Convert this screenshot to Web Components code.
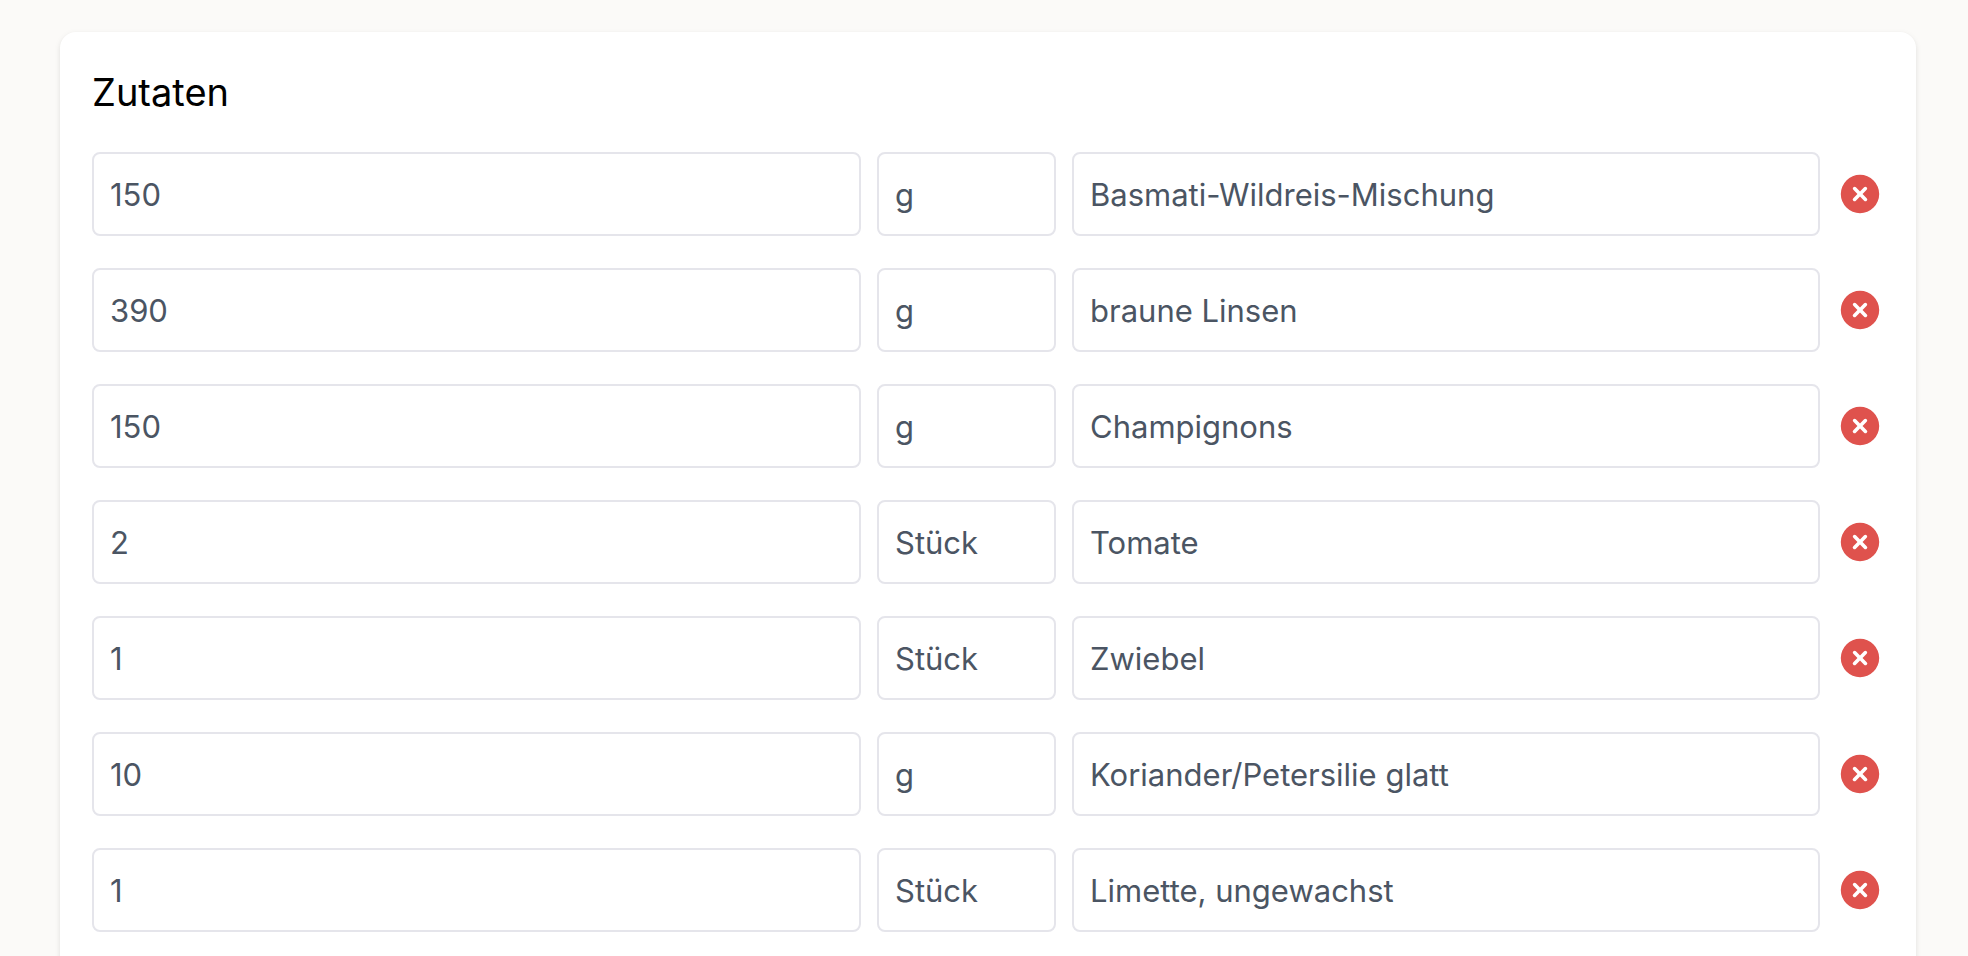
<!DOCTYPE html>
<html lang="de">
<head>
<meta charset="utf-8">
<meta name="viewport" content="width=device-width, initial-scale=1">
<title>Zutaten</title>
<style>
html {
  overflow: hidden auto;
  scrollbar-width: none;
}
body {
  margin: 0;
  padding: 32px 52px 32px 60px;
  background: #fbfaf8;
  color: #000;
  font-family: Inter, "Liberation Sans", sans-serif;
}
</style>
</head>
<body>

<recipe-card>
  <span slot="title">Zutaten</span>
  <ingredient-row amount="150" unit="g" name="Basmati-Wildreis-Mischung"></ingredient-row>
  <ingredient-row amount="390" unit="g" name="braune Linsen"></ingredient-row>
  <ingredient-row amount="150" unit="g" name="Champignons"></ingredient-row>
  <ingredient-row amount="2" unit="Stück" name="Tomate"></ingredient-row>
  <ingredient-row amount="1" unit="Stück" name="Zwiebel"></ingredient-row>
  <ingredient-row amount="10" unit="g" name="Koriander/Petersilie glatt"></ingredient-row>
  <ingredient-row amount="1" unit="Stück" name="Limette, ungewachst"></ingredient-row>
</recipe-card>

<script>
customElements.define('recipe-card', class recipe_card extends HTMLElement {
  constructor() {
    super();
    this.attachShadow({ mode: 'open' });
    const html = `
<style>
:host {
  display: block;
  padding: 32px 32px 64px;
  border-radius: 16px;
  background: #fff;
  box-shadow: 0 2px 6px rgba(0, 0, 0, .08), 0 2px 4px rgba(0, 0, 0, .04);
}
h2 {
  margin: 0 0 32px;
  font-size: 38px;
  font-weight: 400;
  line-height: 56px;
}
.rows {
  display: flex;
  flex-direction: column;
  gap: 32px;
}
</style>

<h2><slot name="title"></slot></h2>
<div class="rows"><slot></slot></div>
  `;
    this.shadowRoot.innerHTML = `${html}`;
  }
});

customElements.define('text-field', class text_field extends HTMLElement {
  constructor() {
    super();
    this.attachShadow({ mode: 'open' });
    const html = `
<style>
:host {
  display: block;
  min-width: 0;
}
input {
  display: block;
  box-sizing: border-box;
  width: 100%;
  margin: 0;
  padding: 16px;
  height: 84px;
  border: 2px solid #e5e5eb;
  border-radius: 8px;
  background: #fff;
  color: #4b5563;
  font-family: inherit;
  font-size: 31px;
  line-height: 48px;
}
input:focus {
  outline: none;
  border-color: #9ca3af;
}
</style>

<input type="text">
  `;
    this.shadowRoot.innerHTML = `${html}`;
    this.input = this.shadowRoot.querySelector('input');
  }

  static get observedAttributes() {
    return ['value', 'label'];
  }

  attributeChangedCallback(name, oldValue, value) {
    if (name === 'value') {
      this.input.value = value;
    }
    if (name === 'label') {
      this.input.setAttribute('aria-label', value);
    }
  }
});

customElements.define('remove-button', class remove_button extends HTMLElement {
  constructor() {
    super();
    this.attachShadow({ mode: 'open' });
    const html = `
<style>
:host {
  display: block;
}
button {
  display: block;
  margin: 0;
  padding: 0;
  border: 0;
  background: none;
  color: #df524d;
  cursor: pointer;
}
svg {
  display: block;
  width: 48px;
  height: 48px;
}
</style>

<button type="button" aria-label="Zutat entfernen">
  <svg viewBox="0 0 20 20" fill="currentColor" aria-hidden="true">
    <path fill-rule="evenodd" clip-rule="evenodd" d="M10 18a8 8 0 100-16 8 8 0 000 16zM8.28 7.22a.75.75 0 00-1.06 1.06L8.94 10l-1.72 1.72a.75.75 0 101.06 1.06L10 11.06l1.72 1.72a.75.75 0 101.06-1.06L11.06 10l1.72-1.72a.75.75 0 00-1.06-1.06L10 8.94 8.28 7.22z"/>
  </svg>
</button>
  `;
    this.shadowRoot.innerHTML = `${html}`;
  }
});

customElements.define('ingredient-row', class ingredient_row extends HTMLElement {
  constructor() {
    super();
    this.attachShadow({ mode: 'open' });
    const html = `
<style>
:host {
  display: grid;
  grid-template-columns: 769fr 179fr 748fr 48px;
  align-items: center;
  column-gap: 16px;
}
</style>

<text-field class="amount" label="Menge"></text-field>
<text-field class="unit" label="Einheit"></text-field>
<text-field class="name" label="Zutat"></text-field>
<remove-button></remove-button>
  `;
    this.shadowRoot.innerHTML = `${html}`;
  }

  connectedCallback() {
    for (const key of ['amount', 'unit', 'name']) {
      this.shadowRoot.querySelector('.' + key).setAttribute('value', this.getAttribute(key));
    }
    this.shadowRoot.querySelector('remove-button').addEventListener('click', () => this.remove());
  }
});
</script>
</body>
</html>
